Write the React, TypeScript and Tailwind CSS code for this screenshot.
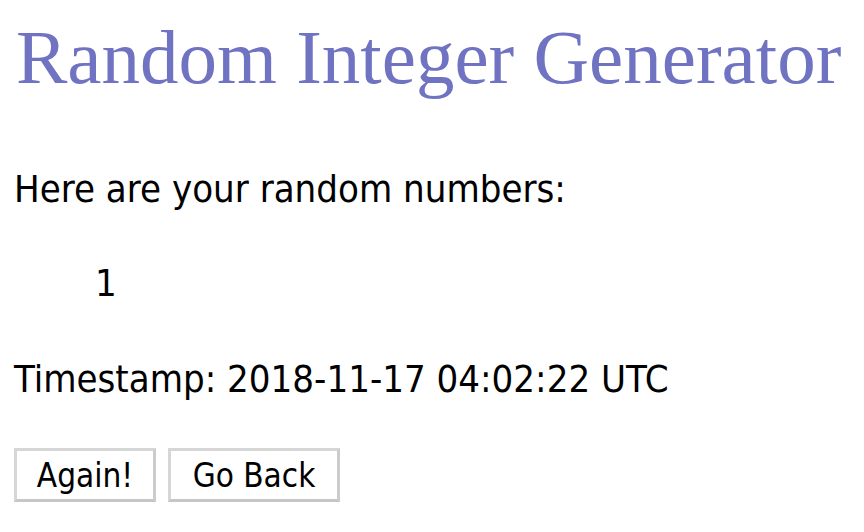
export default function App() {
  return (
    <div className="w-[864px] h-[532px] bg-white overflow-hidden pl-[14px] pt-[14px] text-black">
      <h1 className="font-['Liberation_Serif',Georgia,serif] text-[77px] leading-[86px] text-[#6f73c1] font-normal pl-[2px] whitespace-nowrap">
        Random Integer Generator
      </h1>
      <div className="font-['DejaVu_Sans_Condensed','DejaVu_Sans',sans-serif] text-[38px] leading-[46px]">
        <p className="mt-[66px]">Here are your random numbers:</p>
        <p className="mt-[48px] pl-[81px]">1</p>
        <p className="mt-[50px]">Timestamp: 2018-11-17 04:02:22 UTC</p>
        <div className="mt-[46px] flex gap-[12px]">
          <button className="w-[142px] h-[54px] border-[3px] border-[#d6d6d6] border-b-[#c6c6c6] border-r-[#cccccc] bg-white text-[33px] leading-none">
            Again!
          </button>
          <button className="w-[172px] h-[54px] border-[3px] border-[#d6d6d6] border-b-[#c6c6c6] border-r-[#cccccc] bg-white text-[33px] leading-none">
            Go Back
          </button>
        </div>
      </div>
    </div>
  );
}
